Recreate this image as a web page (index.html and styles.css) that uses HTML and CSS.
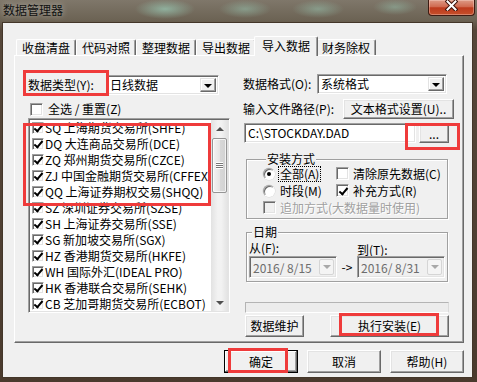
FILE: index.html
```html
<!DOCTYPE html>
<html lang="zh">
<head>
  <meta charset="UTF-8" />
  <title>数据管理器</title>
  <link rel="stylesheet" href="styles.css">
</head>
<body>
  <div class="window">
    <div class="titlebar">
      <span class="title">数据管理器</span>
      <button class="close-btn" aria-label="关闭">
        <svg width="13" height="11" viewBox="0 0 13 11">
          <path d="M2.5 1.5 L10.5 9.5 M10.5 1.5 L2.5 9.5" stroke="#3b1108" stroke-width="4" stroke-linecap="square" />
          <path d="M2.5 1.5 L10.5 9.5 M10.5 1.5 L2.5 9.5" stroke="#fff" stroke-width="2" stroke-linecap="square" />
        </svg>
      </button>
    </div>

    <div class="client">
      <div class="tabs">
        <div class="tab">收盘清盘</div>
        <div class="tab">代码对照</div>
        <div class="tab">整理数据</div>
        <div class="tab">导出数据</div>
        <div class="tab active">导入数据</div>
        <div class="tab">财务除权</div>
      </div>

      <div class="panel">
        <!-- left: market list -->
        <div class="col-left">
          <div class="row">
            <span class="lbl lbl-type">数据类型(Y):</span>
            <div class="combo combo-type">
              <span class="combo-text">日线数据</span>
              <span class="drop"></span>
            </div>
          </div>

          <div class="check-row">
            <span class="cb"></span>
            <span>全选 / 重置(Z)</span>
          </div>

          <div class="listbox">
            <ul class="items">
              <li><span class="cb on"></span>SQ 上海期货交易所(SHFE)</li>
              <li><span class="cb on"></span>DQ 大连商品交易所(DCE)</li>
              <li><span class="cb on"></span>ZQ 郑州期货交易所(CZCE)</li>
              <li><span class="cb on"></span>ZJ 中国金融期货交易所(CFFEX)</li>
              <li><span class="cb on"></span>QQ 上海证券期权交易(SHQQ)</li>
              <li><span class="cb on"></span>SZ 深圳证券交易所(SZSE)</li>
              <li><span class="cb on"></span>SH 上海证券交易所(SSE)</li>
              <li><span class="cb on"></span>SG 新加坡交易所(SGX)</li>
              <li><span class="cb on"></span>HZ 香港期货交易所(HKFE)</li>
              <li><span class="cb on"></span>WH 国际外汇(IDEAL PRO)</li>
              <li><span class="cb on"></span>HK 香港联合交易所(SEHK)</li>
              <li><span class="cb on"></span>CB 芝加哥期货交易所(ECBOT)</li>
            </ul>
            <div class="vscroll">
              <span class="arrow up"></span>
              <div class="track"><span class="thumb"><span class="grip"></span></span></div>
              <span class="arrow down"></span>
            </div>
          </div>
        </div>

        <!-- right: import options -->
        <div class="col-right">
          <div class="row">
            <span class="lbl lbl-format">数据格式(O):</span>
            <div class="combo combo-format">
              <span class="combo-text">系统格式</span>
              <span class="drop"></span>
            </div>
          </div>

          <div class="row row-path">
            <span class="lbl">输入文件路径(P):</span>
            <button class="btn btn-textfmt">文本格式设置(U)..</button>
          </div>

          <div class="row row-file">
            <div class="input">C:\STOCKDAY.DAD</div>
            <button class="btn btn-browse">...</button>
          </div>

          <fieldset class="group group-mode">
            <legend>安装方式</legend>
            <div class="opt"><span class="radio on"></span><span class="focus">全部(A)</span></div>
            <div class="opt"><span class="cb"></span><span>清除原先数据(C)</span></div>
            <div class="opt"><span class="radio"></span><span>时段(M)</span></div>
            <div class="opt"><span class="cb on"></span><span>补充方式(R)</span></div>
            <div class="opt opt-wide disabled"><span class="cb"></span><span>追加方式(大数据量时使用)</span></div>
          </fieldset>

          <fieldset class="group group-date">
            <legend>日期</legend>
            <span class="date-lbl from">从(F):</span>
            <span class="date-lbl to">到(T):</span>
            <div class="date">
              <span class="date-text">2016/ 8/15</span>
              <span class="date-drop"></span>
            </div>
            <span class="arrow-text">-&gt;</span>
            <div class="date">
              <span class="date-text">2016/ 8/31</span>
              <span class="date-drop"></span>
            </div>
          </fieldset>

          <div class="progress"></div>

          <div class="row-actions">
            <button class="btn btn-maint">数据维护</button>
            <button class="btn btn-install">执行安装(E)</button>
          </div>
        </div>
      </div>

      <div class="footer">
        <button class="btn default">确定</button>
        <button class="btn">取消</button>
        <button class="btn">帮助(H)</button>
      </div>
    </div>

    <!-- red annotation boxes -->
    <div class="mark mark-type"></div>
    <div class="mark mark-list"></div>
    <div class="mark mark-browse"></div>
    <div class="mark mark-install"></div>
    <div class="mark mark-ok"></div>
  </div>
</body>
</html>
```

FILE: styles.css
```css
/* Reset */
* {
  box-sizing: border-box;
  margin: 0;
  padding: 0;
}

body {
  width: 477px;
  height: 382px;
  overflow: hidden;
  font-family: "Noto Sans CJK SC", "Noto Sans", sans-serif;
  font-size: 12px;
  line-height: 12px;
  color: #000;
}

/* Window frame (aero glass) */
.window {
  position: relative;
  width: 477px;
  height: 382px;
  display: flex;
  flex-direction: column;
  background:
    radial-gradient(30px 10px at 165px 9px, rgba(150, 192, 172, 0.8), transparent),
    radial-gradient(26px 9px at 245px 9px, rgba(150, 192, 172, 0.55), transparent),
    radial-gradient(26px 9px at 318px 9px, rgba(150, 192, 172, 0.55), transparent),
    radial-gradient(22px 8px at 395px 7px, rgba(150, 192, 172, 0.5), transparent),
    linear-gradient(#7f776a, #6c6354 20px, #56473a 30px, #4a3a2d);
}

.titlebar {
  height: 22px;
  display: flex;
  align-items: flex-start;
}

.title {
  padding: 4px 0 0 3px;
  color: #111;
  text-shadow: 0 0 6px rgba(255, 255, 255, 0.55);
}

.close-btn {
  width: 47px;
  height: 16px;
  margin: 0 2px 0 auto;
  border: 1px solid #3e1b12;
  border-top: 0;
  border-radius: 0 0 4px 4px;
  background: linear-gradient(#dd9a86, #d06a50 45%, #bd3a1d 52%, #c6502b);
  box-shadow: inset 0 0 0 1px rgba(255, 230, 220, 0.35);
  display: flex;
  justify-content: center;
  align-items: flex-start;
}

.client {
  flex: 1;
  margin: 0 4px 4px 2px;
  border: 1px solid #433629;
  background: #f0f0f0;
  display: flex;
  flex-direction: column;
}

/* Tabs */
.tabs {
  display: flex;
  align-items: flex-end;
  height: 19px;
  margin: 13px 0 0 11px;
  padding-left: 2px;
}

.tab {
  height: 16px;
  padding: 0 5px;
  line-height: 15px;
  border: 1px solid #fff;
  border-bottom: 0;
  border-right-color: #696969;
  border-radius: 2px 2px 0 0;
  box-shadow: inset -1px 0 #a0a0a0;
  white-space: nowrap;
}

.tab.active {
  position: relative;
  z-index: 1;
  height: 20px;
  margin: 0 -2px -1px;
  padding: 1px 7px 3px;
  line-height: 15px;
  background: #f0f0f0;
}

.panel {
  width: 450px;
  height: 288px;
  margin-left: 11px;
  border: 1px solid;
  border-color: #fff #696969 #696969 #fff;
  box-shadow: inset -1px -1px #a0a0a0;
  display: flex;
  gap: 13px;
  padding: 18px 0 0 13px;
}

/* Shared controls */
.row {
  display: flex;
  align-items: center;
  height: 20px;
}

.lbl {
  white-space: nowrap;
}

.btn {
  font: inherit;
  color: #000;
  line-height: 12px;
  background: #f0f0f0;
  border: 1px solid;
  border-color: #fff #696969 #696969 #fff;
  box-shadow: inset -1px -1px #a0a0a0, inset 1px 1px #e3e3e3;
  white-space: nowrap;
}

.combo,
.input,
.listbox,
.date {
  border: 1px solid;
  border-color: #a0a0a0 #fff #fff #a0a0a0;
  box-shadow: inset 1px 1px #696969, inset -1px -1px #e3e3e3;
}

.combo {
  display: flex;
  height: 20px;
  padding: 2px 2px 2px 3px;
  background: #fff;
}

.combo-text {
  flex: 1;
  line-height: 14px;
}

.drop {
  width: 16px;
  display: flex;
  align-items: center;
  justify-content: center;
  background: #f0f0f0;
  border: 1px solid;
  border-color: #e3e3e3 #696969 #696969 #e3e3e3;
  box-shadow: inset -1px -1px #a0a0a0, inset 1px 1px #fff;
}

.drop::after {
  content: "";
  border-left: 4px solid transparent;
  border-right: 4px solid transparent;
  border-top: 4px solid #000;
  margin-top: 1px;
}

.cb {
  position: relative;
  flex: none;
  width: 13px;
  height: 13px;
  background: #fff;
  border: 1px solid;
  border-color: #a0a0a0 #fff #fff #a0a0a0;
  box-shadow: inset 1px 1px #696969, inset -1px -1px #e3e3e3;
}

.cb.on::after {
  content: "";
  position: absolute;
  left: 4px;
  top: 1px;
  width: 3px;
  height: 7px;
  border: solid #000;
  border-width: 0 2px 2px 0;
  transform: rotate(40deg);
}

.radio {
  position: relative;
  flex: none;
  width: 12px;
  height: 12px;
  border-radius: 50%;
  background: #fff;
  border: 1px solid;
  border-color: #a0a0a0 #fff #fff #a0a0a0;
  box-shadow: inset 1px 1px #696969, 0 0 0 0.5px #d8d8d8;
}

.radio.on::after {
  content: "";
  position: absolute;
  inset: 3px;
  border-radius: 50%;
  background: #000;
}

/* Left column */
.col-left {
  width: 202px;
  margin-top: 1px;
  display: flex;
  flex-direction: column;
}

.lbl-type {
  width: 78px;
}

.combo-type {
  width: 113px;
}

.check-row {
  display: flex;
  align-items: center;
  gap: 5px;
  height: 16px;
  margin: 6px 0 0 2px;
}

.listbox {
  height: 195px;
  margin-top: 1px;
  padding: 1px;
  display: flex;
  background: #fff;
}

.items {
  flex: 1;
  list-style: none;
  overflow: hidden;
}

.items li {
  height: 16px;
  display: flex;
  align-items: center;
  gap: 1px;
  padding-left: 2px;
  white-space: nowrap;
}

.items .cb {
  width: 12px;
  height: 12px;
}

.items .cb.on::after {
  left: 3px;
  top: 0;
}

/* Scrollbar */
.vscroll {
  width: 17px;
  display: flex;
  flex-direction: column;
  background: linear-gradient(to right, #e2e2e2, #f2f2f2 40%, #f2f2f2 60%, #e2e2e2);
}

.arrow {
  height: 17px;
  flex: none;
  display: flex;
  align-items: center;
  justify-content: center;
}

.arrow::after {
  content: "";
  border-left: 4px solid transparent;
  border-right: 4px solid transparent;
}

.arrow.up::after {
  border-bottom: 4px solid #4f4f4f;
}

.arrow.down::after {
  border-top: 4px solid #4f4f4f;
}

.track {
  flex: 1;
  padding: 1px 1px 0;
}

.thumb {
  height: 55px;
  display: flex;
  align-items: center;
  justify-content: center;
  border: 1px solid #959595;
  border-radius: 2px;
  background: linear-gradient(to right, #f4f4f4, #e6e6e6 50%, #d8d8d8 51%, #d2d2d2);
  box-shadow: inset 0 0 0 1px rgba(255, 255, 255, 0.7);
}

.grip {
  width: 7px;
  height: 7px;
  background: repeating-linear-gradient(#fff 0 1px, #777 1px 2px);
}

/* Right column */
.col-right {
  width: 212px;
  display: flex;
  flex-direction: column;
}

.lbl-format {
  width: 74px;
}

.combo-format {
  width: 130px;
}

.row-path {
  margin-top: 5px;
}

.btn-textfmt {
  width: 111px;
  height: 20px;
  margin: 0 1px 0 auto;
}

.row-file {
  margin-top: 4px;
}

.input {
  width: 172px;
  height: 20px;
  margin-left: 1px;
  padding: 0 3px;
  line-height: 18px;
  background: #fff;
  white-space: nowrap;
}

.btn-browse {
  width: 30px;
  height: 19px;
  margin-left: 3px;
  align-self: flex-end;
}

/* Group boxes */
.group {
  width: 202px;
  margin-left: 3px;
  min-width: 0;
  border: 1px solid #a0a0a0;
  box-shadow: inset 1px 1px #fff, 1px 1px #fff;
}

.group legend {
  margin-left: 3px;
  padding: 0 1px;
  line-height: 12px;
  background: #f0f0f0;
}

.group-mode {
  margin-top: 10px;
  padding: 0 0 2px 16px;
  display: grid;
  grid-template-columns: 73px auto;
  grid-auto-rows: 17px;
}

.opt {
  display: flex;
  align-items: center;
  gap: 5px;
  white-space: nowrap;
}

.opt .cb + span {
  margin-left: -1px;
}

.opt-wide {
  grid-column: 1 / 3;
}

.disabled {
  color: #a0a0a0;
  text-shadow: 1px 1px #fff;
}

.disabled .cb {
  background: #f0f0f0;
}

.focus {
  outline: 1px dotted #000;
  outline-offset: 1px;
}

.group-date {
  margin-top: 7px;
  padding: 0 0 3px 2px;
  display: grid;
  grid-template-columns: 88px 20px 88px;
  grid-template-rows: 18px 22px;
}

.date-lbl {
  align-self: start;
  white-space: nowrap;
}

.date-lbl.from {
  grid-column: 1;
  margin-top: 4px;
}

.date-lbl.to {
  grid-column: 3;
  margin-top: 6px;
}

.date {
  display: flex;
  height: 22px;
  padding: 2px 2px 2px 3px;
  background: #f0f0f0;
  color: #6d6d6d;
}

.date-text {
  flex: 1;
  line-height: 17px;
  white-space: pre;
}

.date-drop {
  width: 15px;
  display: flex;
  align-items: center;
  justify-content: center;
  border: 1px solid #d5d5d5;
  border-radius: 2px;
  background: #f4f4f4;
}

.date-drop::after {
  content: "";
  border-left: 4px solid transparent;
  border-right: 4px solid transparent;
  border-top: 4px solid #a8a8a8;
}

.arrow-text {
  line-height: 22px;
  text-align: center;
}

.progress {
  width: 204px;
  height: 11px;
  margin: 20px 0 0 2px;
  border: 1px solid #b4b4b4;
  border-right-color: #dadada;
  border-bottom-color: #fff;
  background: #ececec;
}

.row-actions {
  display: flex;
  justify-content: space-between;
  margin-top: 2px;
  padding: 0 6px 0 2px;
}

.btn-maint {
  width: 59px;
  height: 22px;
}

.btn-install {
  width: 119px;
  height: 22px;
}

/* Dialog buttons */
.footer {
  display: flex;
  justify-content: flex-end;
  gap: 9px;
  margin-top: 7px;
  padding-right: 8px;
}

.footer .btn {
  width: 74px;
  height: 23px;
}

.footer .btn.default {
  border-color: #000;
  box-shadow: inset -1px -1px #696969, inset 1px 1px #fff, inset -2px -2px #a0a0a0;
}

/* Red annotation boxes */
.mark {
  position: absolute;
  border: 3px solid #ef3b3b;
}

.mark-type {
  left: 23px;
  top: 70px;
  width: 86px;
  height: 26px;
}

.mark-list {
  left: 23px;
  top: 123px;
  width: 188px;
  height: 83px;
}

.mark-browse {
  left: 405px;
  top: 123px;
  width: 55px;
  height: 27px;
}

.mark-install {
  left: 339px;
  top: 313px;
  width: 100px;
  height: 23px;
}

.mark-ok {
  left: 228px;
  top: 348px;
  width: 60px;
  height: 25px;
}
```
